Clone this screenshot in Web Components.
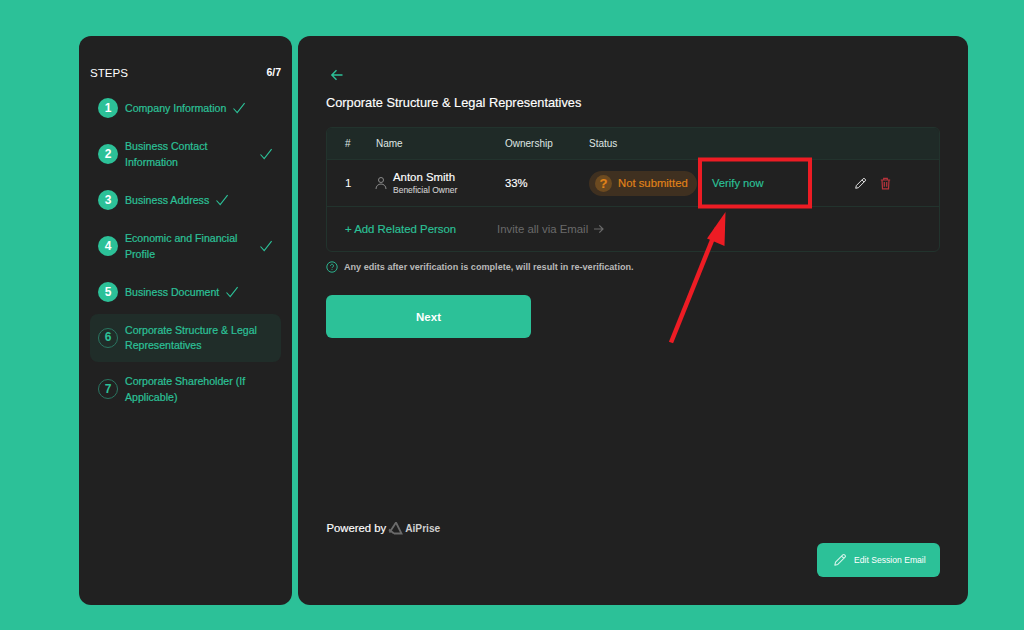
<!DOCTYPE html>
<html><head><meta charset="utf-8">
<style>
html,body{margin:0;height:100%}
body{background:#2cc198;font-family:"Liberation Sans",Arial,sans-serif}
app-shell{height:630px}
</style></head>
<body>
<app-shell>
  <step-list slot="side"></step-list>
  <main-panel slot="main"></main-panel>
</app-shell>
<script>
const check='<svg width="16" height="16" viewBox="0 0 16 16" fill="none" stroke="#2cc198" stroke-width="1.1"><path d="M2.5 8.5l3.7 4.2L13.6 3.2"/></svg>';
const pencil=(c,s)=>`<svg width="${s}" height="${s}" viewBox="0 0 16 16" fill="none" stroke="${c}" stroke-width="1.2" stroke-linejoin="round"><path d="M11.2 2.2a1.5 1.5 0 0 1 2.1 0l.5.5a1.5 1.5 0 0 1 0 2.1l-8.3 8.3-3.4.8.8-3.4zM9.8 3.6l2.6 2.6"/></svg>`;
class AppShell extends HTMLElement{constructor(){super();this.attachShadow({mode:'open'}).innerHTML=`<style>
:host{display:flex;gap:6px;padding:36px 56px 25px 79px;box-sizing:border-box;width:1024px}
</style><slot name="side"></slot><slot name="main"></slot>`}}
class StepItem extends HTMLElement{constructor(){super();const n=this.getAttribute('n'),st=this.getAttribute('state')||'done';this.attachShadow({mode:'open'}).innerHTML=`<style>
:host{display:flex;align-items:center;box-sizing:border-box;min-height:var(--h,32px);padding:0 0 0 8px;font-size:10.6px;line-height:16px;font-weight:400;color:#2cc198;border-radius:8px;-webkit-text-stroke:.2px #2cc198}
:host([state=active]){background:#202d29;line-height:15.5px}
.c{flex:none;width:20px;height:20px;border-radius:50%;display:flex;align-items:center;justify-content:center;font-size:12px;font-weight:700;box-sizing:border-box;margin-right:7px;-webkit-text-stroke:0}
.done{background:#2cc198;color:#fff}
.todo{border:1.3px solid #2a7561;color:#2cc198}
.t{display:block}
.ck{flex:none;display:flex}
.inline{margin-left:5px}
.far{margin-left:auto;margin-right:7px}
</style><span class="c ${st=='done'?'done':'todo'}">${n}</span><span class="t"><slot></slot></span>${st=='done'?`<span class="ck ${this.hasAttribute('far')?'far':'inline'}">${check}</span>`:''}`}}
class StepList extends HTMLElement{constructor(){super();this.attachShadow({mode:'open'}).innerHTML=`<style>
:host{display:block;width:213px;height:569px;box-sizing:border-box;background:#212121;border-radius:12px;padding:28px 11px 0}
.h{display:flex;justify-content:space-between;align-items:center;color:#fff;font-size:11.6px;height:16px;margin-bottom:11.5px}
.h b{font-size:10.5px}
.l{display:flex;flex-direction:column;gap:6.5px}
step-item[two]{--h:47px;width:191px}
step-item[state=active]{--h:48px}
step-item[last]{margin-top:-3px}
</style><div class="h"><span>STEPS</span><b>6/7</b></div><div class="l">
<step-item n="1">Company Information</step-item>
<step-item n="2" two far>Business Contact<br>Information</step-item>
<step-item n="3">Business Address</step-item>
<step-item n="4" two far>Economic and Financial<br>Profile</step-item>
<step-item n="5">Business Document</step-item>
<step-item n="6" state="active" two>Corporate Structure &amp; Legal<br>Representatives</step-item>
<step-item n="7" state="todo" two last>Corporate Shareholder (If<br>Applicable)</step-item>
</div>`}}
class PeopleTable extends HTMLElement{constructor(){super();this.attachShadow({mode:'open'}).innerHTML=`<style>
:host{display:block;border:1px solid #22332d;border-radius:6px;height:125px;box-sizing:border-box;overflow:visible;font-size:11px;color:#fff}
.r{display:grid;grid-template-columns:31px 129px 84px 123px 142px 1fr;padding-left:18px;align-items:center;box-sizing:border-box}
.head{height:32px;background:#1f2a27;border-bottom:1px solid #22332d;border-radius:5px 5px 0 0;font-size:10px;color:#dfe6e3}
.row{height:47px;border-bottom:1px solid #22332d}
.num{font-size:11.5px}
.name{display:flex;align-items:center;gap:6px;margin-left:-1px}
.nm{font-size:11.4px;line-height:14px;-webkit-text-stroke:.15px #fff}
.sub{font-size:8.5px;line-height:11px;color:#cfcfcf;margin-top:1px;-webkit-text-stroke:.1px #cfcfcf}
.own{font-size:11.3px;-webkit-text-stroke:.15px #fff}
.pill{display:inline-flex;align-items:center;height:25px;width:108px;box-sizing:border-box;padding-left:6px;border-radius:13px;background:#3f3020;color:#e08319;font-size:11.3px;gap:6px;white-space:nowrap;-webkit-text-stroke:.15px #e08319}
.q{width:17px;height:17px;border-radius:50%;background:#6c4a20;display:flex;align-items:center;justify-content:center;font-size:13px;font-weight:700;color:#e08319}
.v{color:#2cc198;font-size:11.2px;-webkit-text-stroke:.15px #2cc198}
.acts{display:flex;align-items:center;gap:12px}
.acts svg{display:block}
.foot{display:flex;align-items:center;height:44px;padding-left:18px;font-size:11.4px}
.add{color:#2cc198;width:152px;-webkit-text-stroke:.15px #2cc198}
.inv{color:#6a6a6a;display:flex;align-items:center;gap:5px}
</style>
<div class="r head"><span>#</span><span>Name</span><span>Ownership</span><span>Status</span><span></span><span></span></div>
<div class="r row"><span class="num">1</span>
<div class="name"><svg width="12" height="14" viewBox="0 0 12 14" fill="none" stroke="#8a8a8a" stroke-width="1"><circle cx="6" cy="4" r="2.5"/><path d="M1 13c0-3 2.2-5 5-5s5 2 5 5"/></svg><div><div class="nm">Anton Smith</div><div class="sub">Beneficial Owner</div></div></div>
<span class="own">33%</span>
<span><span class="pill"><span class="q">?</span>Not submitted</span></span>
<span class="v">Verify now</span>
<div class="acts">${pencil('#e6e6e6',13)}<svg width="13" height="13" viewBox="0 0 13 13" fill="none" stroke="#b8343c" stroke-width="1.2"><path d="M1.8 3h9.4M4.7 3V1.4h3.6V3M3 3l.5 8.8h6L10 3M5.3 5v4.8M7.700 5v4.8"/></svg></div></div>
<div class="foot"><span class="add">+ Add Related Person</span><span class="inv">Invite all via Email <svg width="11" height="10" viewBox="0 0 11 10" fill="none" stroke="#6a6a6a" stroke-width="1.2"><path d="M1 5h9M6.3 1.3L10 5 6.3 8.7"/></svg></span></div>`}}
class AnnotationMark extends HTMLElement{constructor(){super();this.attachShadow({mode:'open'}).innerHTML=`<style>
:host{position:absolute;left:660px;top:150px;width:160px;height:200px;pointer-events:none}
svg{display:block}
</style><svg width="160" height="200" viewBox="0 0 160 200" fill="none"><rect x="40" y="9.5" width="110" height="47" stroke="#ed1c24" stroke-width="4"/><path d="M11 192.500L57 78" stroke="#ed1c24" stroke-width="4.500"/><path d="M65.500 62L47 88.500L64.500 96z" fill="#ed1c24"/></svg>`}}
class MainPanel extends HTMLElement{constructor(){super();this.attachShadow({mode:'open'}).innerHTML=`<style>
:host{display:flex;flex-direction:column;position:relative;flex:1;height:569px;box-sizing:border-box;background:#212121;border-radius:12px;padding:32px 28px 28px;color:#fff}
.back{display:flex;height:14px;margin-left:4px;margin-bottom:10.5px}
h1{margin:0 0 14.5px;font-size:12.8px;font-weight:400;line-height:20px;color:#fff;-webkit-text-stroke:.15px #fff}
.note{display:flex;align-items:center;gap:6px;font-size:9.1px;font-weight:700;color:#b9b9b9;margin-top:8px;height:14px}
.next{display:flex;align-items:center;justify-content:center;width:205px;height:43px;margin-top:21px;border-radius:6px;background:#2cc198;color:#fff;font-size:11.5px;font-weight:700}
.foot{margin-top:auto;display:flex;flex-direction:column}
.pow{display:flex;align-items:center;font-size:11.3px;height:16px;gap:2px;-webkit-text-stroke:.15px #fff;margin-left:.5px}
.pow b{font-size:10.2px;color:#cfcfcf;-webkit-text-stroke:0}
.edit{align-self:flex-end;display:flex;align-items:center;gap:7px;width:123px;height:34px;margin-top:7px;box-sizing:border-box;padding-left:16px;border-radius:6px;background:#2cc198;color:#fff;font-size:8.6px}
</style>
<div class="back"><svg width="14" height="14" viewBox="0 0 14 14" fill="none" stroke="#2cc198" stroke-width="1.400"><path d="M12.500 7H2M6.500 2.300L1.800 7l4.700 4.700"/></svg></div>
<h1>Corporate Structure &amp; Legal Representatives</h1>
<people-table></people-table>
<div class="note"><svg width="12" height="12" viewBox="0 0 12 12" fill="none" stroke="#2cc198" stroke-width=".9"><circle cx="6" cy="6" r="5.200"/><path d="M4.500 4.700a1.500 1.500 0 1 1 2.300 1.300c-.5.300-.8.600-.8 1.100M6 8.200v.8"/></svg>Any edits after verification is complete, will result in re-verification.</div>
<div class="next">Next</div>
<div class="foot"><div class="pow"><span>Powered by</span><svg width="15" height="14" viewBox="0 0 15 14" fill="none" stroke="#6b6b6b" stroke-width="1.800"><path d="M8 1.500L1.500 11.500M8 1.500L13.500 12.500H6M1 8.500l5 4"/></svg><b>AiPrise</b></div>
<div class="edit">${pencil('#d9f5ec',14)}<span>Edit Session Email</span></div></div>`}}
customElements.define('app-shell',AppShell);
customElements.define('step-item',StepItem);
customElements.define('step-list',StepList);
customElements.define('people-table',PeopleTable);
customElements.define('annotation-mark',AnnotationMark);
customElements.define('main-panel',MainPanel);
document.body.appendChild(document.createElement('annotation-mark'));
</script>
</body></html>
